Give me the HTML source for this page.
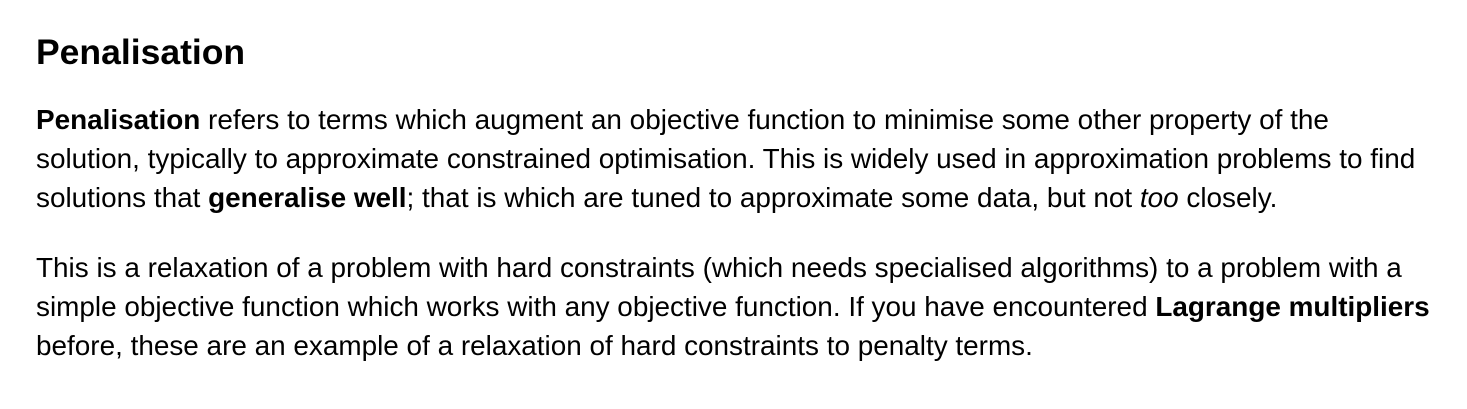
<!DOCTYPE html>
<html><head><meta charset="utf-8"><style>
html,body{margin:0;padding:0;background:#fff;width:1467px;height:409px;overflow:hidden}
body{font-family:"Liberation Sans",Arial,sans-serif;color:#000}
h2{position:absolute;left:36px;top:30px;margin:0;font-size:35.5px;font-weight:bold;line-height:44px}
p{position:absolute;left:36px;margin:0;font-size:27.9px;line-height:39px;width:1430px;white-space:nowrap}
#p1{top:100px}
#p2{top:248px}
</style></head><body>
<h2>Penalisation</h2>
<p id="p1"><b>Penalisation</b> refers to terms which augment an objective function to minimise some other property of the<br>solution, typically to approximate constrained optimisation. This is widely used in approximation problems to find<br>solutions that <b>generalise well</b>; that is which are tuned to approximate some data, but not <i>too</i> closely.</p>
<p id="p2">This is a relaxation of a problem with hard constraints (which needs specialised algorithms) to a problem with a<br>simple objective function which works with any objective function. If you have encountered <b>Lagrange multipliers</b><br>before, these are an example of a relaxation of hard constraints to penalty terms.</p>
</body></html>
